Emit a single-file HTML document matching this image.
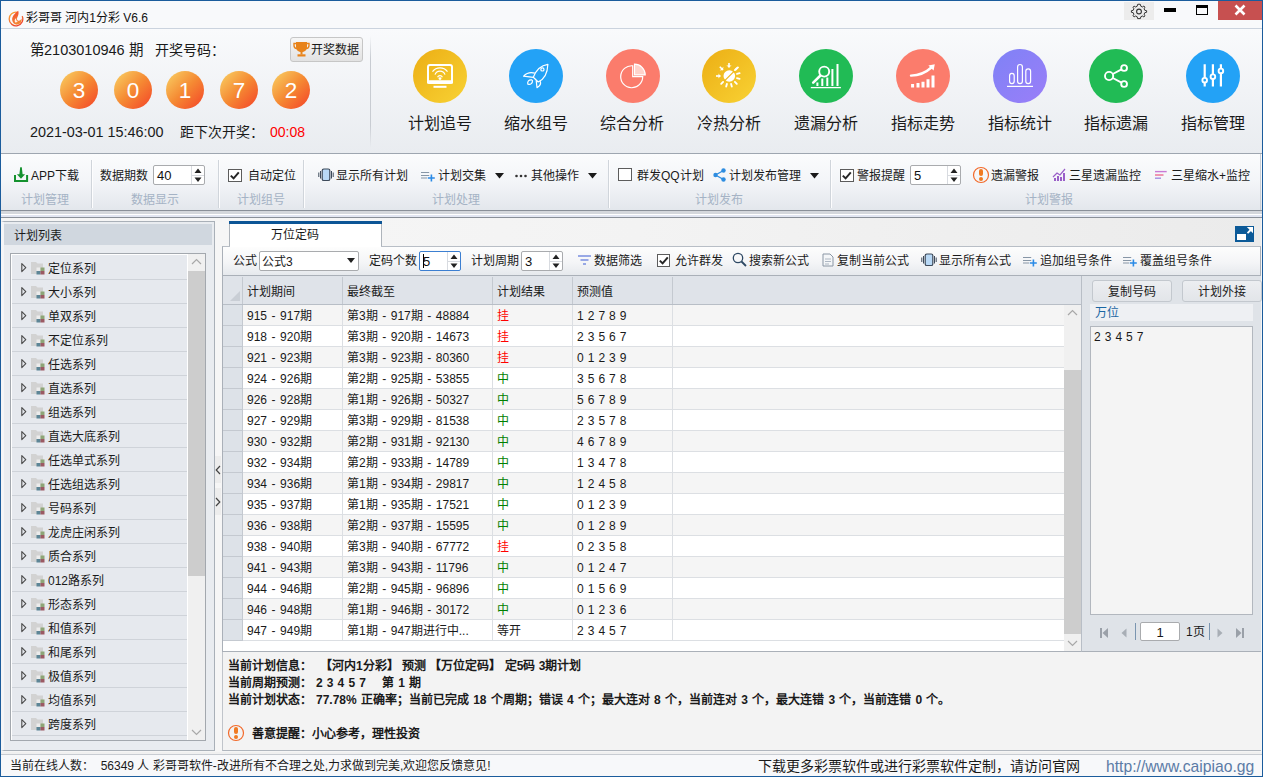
<!DOCTYPE html>
<html lang="zh-CN"><head><meta charset="utf-8">
<style>
*{box-sizing:border-box;margin:0;padding:0}
html,body{width:1263px;height:777px;overflow:hidden;background:#f0f0f0}
body{font-family:"Liberation Sans",sans-serif;font-size:12px;color:#1a1a1a;position:relative}
.a{position:absolute}
.ball{width:38px;height:38px;border-radius:50%;background:linear-gradient(135deg,#f8c25a 12%,#f58a33 50%,#f4502a 90%);color:#fff;font-size:22.5px;text-align:center;line-height:40px}
.t{position:absolute;white-space:nowrap;line-height:1}
#win{position:absolute;left:0;top:0;width:1263px;height:777px;border:1px solid #1b5c9c;border-right:1px solid #1b5c9c;background:#f0f0f0}
</style></head><body>
<div id="win"></div>
<!-- title bar -->
<div class="a" style="left:1px;top:1px;width:1261px;height:27px;background:#f8f9fb"></div>
<div class="a" style="left:1px;top:28px;width:1261px;height:1px;background:#cbd3de"></div>
<svg class="a" style="left:8px;top:10px" width="17" height="17" viewBox="0 0 17 17">
 <defs><linearGradient id="rg" x1="0" y1="0" x2="0.6" y2="1"><stop offset="0" stop-color="#f9b13a"/><stop offset="1" stop-color="#f0402c"/></linearGradient>
 <linearGradient id="fg" x1="0.3" y1="0" x2="0.5" y2="1"><stop offset="0" stop-color="#f24a2e"/><stop offset="1" stop-color="#f58a34"/></linearGradient></defs>
 <path d="M9.18 2.3A6.8 6.8 0 1 0 14.16 6.13" fill="none" stroke="url(#rg)" stroke-width="1.3"/>
 <path d="M10.2 0.8C6.8 3.5 3.8 6.5 4.2 10.3C4.6 13.4 7.2 15 9.6 14.6C12.6 14.1 14.2 11.6 13.4 8.6C12.8 10.4 11.3 11.1 10.2 10.7C8.7 10.1 8.6 8.2 9.6 6.7C10.6 5.1 10.9 2.8 10.2 0.8Z" fill="url(#fg)"/>
 <path d="M7.3 12.6C6.2 11.2 6.6 9 8.2 8.1C7.8 9.6 8.3 11 9.8 11.6C9 12.4 8 12.6 7.3 12.6Z" fill="#fff" opacity="0.9"/>
</svg>
<div class="t" style="left:26px;top:12px;font-size:12px;color:#111">彩哥哥 河内1分彩 V6.6</div>
<div class="a" style="left:1124px;top:2px;width:30px;height:18px;background:#ececec"></div>
<svg class="a" style="left:1130px;top:3px" width="18" height="17" viewBox="0 0 18 17">
 <path d="M9 1.2 L10.4 1.4 L10.8 3.2 L12.3 4 L13.9 3.1 L15 4.2 L14.1 5.8 L14.8 7.3 L16.6 7.7 L16.6 9.3 L14.8 9.7 L14.1 11.2 L15 12.8 L13.9 13.9 L12.3 13 L10.8 13.8 L10.4 15.6 L7.6 15.6 L7.2 13.8 L5.7 13 L4.1 13.9 L3 12.8 L3.9 11.2 L3.2 9.7 L1.4 9.3 L1.4 7.7 L3.2 7.3 L3.9 5.8 L3 4.2 L4.1 3.1 L5.7 4 L7.2 3.2 L7.6 1.4Z" fill="none" stroke="#333" stroke-width="1"/>
 <circle cx="9" cy="8.5" r="2.4" fill="none" stroke="#333" stroke-width="1.1"/>
</svg>
<div class="a" style="left:1164px;top:8px;width:12px;height:4px;background:#000"></div>
<div class="a" style="left:1196px;top:5px;width:12px;height:10px;border:1.5px solid #000;border-top:3px solid #000"></div>
<div class="a" style="left:1218px;top:1px;width:44px;height:19px;background:#c75050"></div>
<svg class="a" style="left:1234px;top:4px" width="12" height="12" viewBox="0 0 12 12"><path d="M1.5 1.5L10.5 10.5M10.5 1.5L1.5 10.5" stroke="#fff" stroke-width="2.6"/></svg>

<!-- header -->
<div class="a" style="left:1px;top:29px;width:1261px;height:124px;background:linear-gradient(#f9fafc,#e9ecf0)"></div>
<div class="a" style="left:1px;top:153px;width:1261px;height:1px;background:#9ea6b0"></div>
<div class="a" style="left:370px;top:36px;width:1px;height:112px;background:linear-gradient(rgba(200,204,210,0),#c8ccd2 20%,#c8ccd2 80%,rgba(200,204,210,0))"></div>
<div class="t" style="left:30px;top:43px;font-size:14.5px;color:#1a1a1a">第2103010946 期</div><div class="t" style="left:155px;top:43px;font-size:14px;color:#1a1a1a">开奖号码：</div>
<div class="a" style="left:290px;top:37px;width:73px;height:25px;border:1px solid #c6c6c6;border-radius:3px;background:linear-gradient(#f6f6f6,#e2e2e2)"></div>
<svg class="a" style="left:293px;top:41px" width="17" height="16" viewBox="0 0 17 16">
 <path d="M3 1H14V6C14 9 11.5 11 8.5 11C5.5 11 3 9 3 6Z" fill="#e8831a"/>
 <path d="M3 2.5H1V4.5C1 6.5 2.5 7.5 4 7.5" fill="none" stroke="#e8831a" stroke-width="1.4"/>
 <path d="M14 2.5H16V4.5C16 6.5 14.5 7.5 13 7.5" fill="none" stroke="#e8831a" stroke-width="1.4"/>
 <rect x="7.5" y="10.5" width="2" height="3" fill="#e8831a"/><rect x="4.5" y="13.3" width="8" height="2.2" fill="#e8831a"/>
</svg>
<div class="t" style="left:311px;top:44px;font-size:12px;color:#1a1a1a">开奖数据</div>
<!-- balls -->
<div class="a ball" style="left:60px;top:71px">3</div>
<div class="a ball" style="left:114px;top:71px">0</div>
<div class="a ball" style="left:166px;top:71px">1</div>
<div class="a ball" style="left:220px;top:71px">7</div>
<div class="a ball" style="left:272px;top:71px">2</div>
<div class="t" style="left:30px;top:125px;font-size:14.4px;color:#1a1a1a">2021-03-01 15:46:00</div><div class="t" style="left:180px;top:125px;font-size:14px;color:#1a1a1a">距下次开奖：</div>
<div class="t" style="left:270px;top:125px;font-size:14px;color:#ff0000">00:08</div>
<!-- icons -->
<div class="a" style="left:413px;top:49px;width:54px;height:54px;border-radius:50%;background:linear-gradient(135deg,#ecae14,#f8d234)"></div>
<div class="t" style="left:390px;width:100px;text-align:center;top:116px;font-size:16px;color:#1a1a1a">计划追号</div>
<div class="a" style="left:509px;top:49px;width:54px;height:54px;border-radius:50%;background:#23a2f6"></div>
<div class="t" style="left:486px;width:100px;text-align:center;top:116px;font-size:16px;color:#1a1a1a">缩水组号</div>
<div class="a" style="left:606px;top:49px;width:54px;height:54px;border-radius:50%;background:#fb7c6c"></div>
<div class="t" style="left:582px;width:100px;text-align:center;top:116px;font-size:16px;color:#1a1a1a">综合分析</div>
<div class="a" style="left:702px;top:49px;width:54px;height:54px;border-radius:50%;background:linear-gradient(135deg,#ecae14,#f8d234)"></div>
<div class="t" style="left:679px;width:100px;text-align:center;top:116px;font-size:16px;color:#1a1a1a">冷热分析</div>
<div class="a" style="left:799px;top:49px;width:54px;height:54px;border-radius:50%;background:#21bb55"></div>
<div class="t" style="left:776px;width:100px;text-align:center;top:116px;font-size:16px;color:#1a1a1a">遗漏分析</div>
<div class="a" style="left:896px;top:49px;width:54px;height:54px;border-radius:50%;background:#fb7c6c"></div>
<div class="t" style="left:873px;width:100px;text-align:center;top:116px;font-size:16px;color:#1a1a1a">指标走势</div>
<div class="a" style="left:993px;top:49px;width:54px;height:54px;border-radius:50%;background:linear-gradient(135deg,#7f82f6,#9a7ef8)"></div>
<div class="t" style="left:970px;width:100px;text-align:center;top:116px;font-size:16px;color:#1a1a1a">指标统计</div>
<div class="a" style="left:1089px;top:49px;width:54px;height:54px;border-radius:50%;background:#21bb55"></div>
<div class="t" style="left:1066px;width:100px;text-align:center;top:116px;font-size:16px;color:#1a1a1a">指标遗漏</div>
<div class="a" style="left:1186px;top:49px;width:54px;height:54px;border-radius:50%;background:#23a2f6"></div>
<div class="t" style="left:1163px;width:100px;text-align:center;top:116px;font-size:16px;color:#1a1a1a">指标管理</div>

<!-- iconsvg -->
<svg class="a" style="left:413px;top:49px" width="54" height="54" viewBox="0 0 54 54"><rect x="15" y="16" width="24" height="18" rx="2" fill="none" stroke="#fff" stroke-width="2"/><rect x="14" y="31.3" width="26" height="3.4" rx="1" fill="#fff"/><rect x="20.5" y="36.8" width="13" height="2" fill="#fff"/><path d="M19.5 22.6A9.45 9.45 0 0 1 34.5 22.6M22 25.6A5.3 5.3 0 0 1 32 25.6M24.6 28.2A2.6 2.6 0 0 1 29.4 28.2" fill="none" stroke="#fff" stroke-width="1.2"/><circle cx="27" cy="29.6" r="1.4" fill="#fff"/></svg>
<svg class="a" style="left:509px;top:49px" width="54" height="54" viewBox="0 0 54 54"><g fill="none" stroke="#fff" stroke-width="1.2" stroke-linejoin="round"><path d="M38.9 15.3C32.5 16.2 27 21 24.3 28.3L29.2 33C36.2 30 38.6 22.5 38.9 15.3Z"/><circle cx="33.4" cy="20.4" r="1.6"/><path d="M25.8 24.2C21.5 23 17.5 24.2 14.6 27.2L24.3 28.3"/><path d="M31 31.8C32.2 34.3 31 37 28 38.6L27.2 31.4"/><path d="M22.5 30.8C19.8 30.6 18.2 32.2 18.8 35.2C21.8 35.8 23.6 34.2 23.5 31.6Z"/></g></svg>
<svg class="a" style="left:606px;top:49px" width="54" height="54" viewBox="0 0 54 54"><path d="M26.7 16.8A11 11 0 1 0 36.7 27.7H26.7Z" fill="none" stroke="#fff" stroke-width="1.2"/><path d="M28.5 15.2V25.9H39.2A10.7 10.7 0 0 0 28.5 15.2Z" fill="#ffd3cb" stroke="#fff" stroke-width="1.2"/></svg>
<svg class="a" style="left:702px;top:49px" width="54" height="54" viewBox="0 0 54 54"><circle cx="27.3" cy="27" r="5.8" fill="#fff"/><path d="M22 32.3L33.5 20.8" stroke="#f0b81c" stroke-width="1.2"/><path d="M33.2 21.1L36.5 17.8" stroke="#fff" stroke-width="1.8"/><path d="M32.9 21.1L34.8 19.2M35.0 24.9L37.6 24.2M35.0 29.1L37.6 29.8M32.9 32.9L34.8 34.8M29.1 35.0L29.8 37.6M24.9 35.0L24.2 37.6M21.1 32.9L19.2 34.8" stroke="#fff" stroke-width="1.9" stroke-linecap="round"/><path d="M14.0 27.0L18.5 27.0" stroke="#fff" stroke-width="1.6"/><path d="M18.5 27.0L16.5 24.4L16.5 29.6Z" fill="#fff"/><path d="M17.8 17.8L21.0 21.0" stroke="#fff" stroke-width="1.6"/><path d="M21.0 21.0L21.4 17.7L17.7 21.4Z" fill="#fff"/><path d="M27.0 14.0L27.0 18.5" stroke="#fff" stroke-width="1.6"/><path d="M27.0 18.5L29.6 16.5L24.4 16.5Z" fill="#fff"/></svg>
<svg class="a" style="left:799px;top:49px" width="54" height="54" viewBox="0 0 54 54"><circle cx="25.2" cy="22.6" r="5" fill="none" stroke="#fff" stroke-width="1.9"/><path d="M21.2 26.8L14.2 33.6" stroke="#fff" stroke-width="2.6" stroke-linecap="round"/><path d="M18.4 37V33.6M23.3 37V29.5M28.3 37V28.5M33.4 37V20M38.5 37V15" stroke="#fff" stroke-width="2"/><path d="M11.8 38.6H41.9" stroke="#fff" stroke-width="1.3"/></svg>
<svg class="a" style="left:896px;top:49px" width="54" height="54" viewBox="0 0 54 54"><path d="M15 26.6C23 26.5 30 23.5 36 18" fill="none" stroke="#fff" stroke-width="2.4" stroke-linecap="round"/><path d="M38.8 15.2L32.4 16.6L37.6 21.6Z" fill="#fff"/><path d="M16.6 38.5V35M22 38.5V34M27 38.5V32.8M32 38.5V30.2M37 38.5V26.4" stroke="#fff" stroke-width="3"/></svg>
<svg class="a" style="left:993px;top:49px" width="54" height="54" viewBox="0 0 54 54"><g fill="none" stroke="#fff" stroke-width="1.2"><rect x="16.6" y="24.4" width="4.6" height="10.2" rx="2.3"/><rect x="24.6" y="15.5" width="4.8" height="19.1" rx="2.4"/><rect x="32.8" y="19.8" width="4.8" height="14.8" rx="2.4"/></g><path d="M14 37.4H40" stroke="#fff" stroke-width="1.2"/></svg>
<svg class="a" style="left:1089px;top:49px" width="54" height="54" viewBox="0 0 54 54"><g fill="none" stroke="#fff" stroke-width="1.9"><circle cx="20.1" cy="27" r="4.1"/><circle cx="35.1" cy="19" r="2.9"/><circle cx="35.1" cy="35" r="2.9"/><path d="M23.8 25L32.5 20.4M23.8 29L32.5 33.6"/></g></svg>
<svg class="a" style="left:1186px;top:49px" width="54" height="54" viewBox="0 0 54 54"><path d="M18.7 15.2V37.6M26.9 15.2V37.6M34.9 15.2V37.6" stroke="#fff" stroke-width="2.2"/><g fill="#23a2f6" stroke="#fff" stroke-width="1.9"><circle cx="18.7" cy="31.2" r="2.3"/><circle cx="26.9" cy="27.7" r="2.3"/><circle cx="34.9" cy="21.9" r="2.3"/></g></svg>
<!-- ribbon -->
<div class="a" style="left:1px;top:154px;width:1261px;height:56px;background:linear-gradient(#fbfcfd,#f3f5f8 50%,#e3e7ec)"></div>
<div class="a" style="left:1px;top:210px;width:1261px;height:1px;background:#8a9099"></div>
<div class="a" style="left:1px;top:211px;width:1261px;height:3px;background:#d4d7dc"></div>
<div class="a" style="left:1px;top:214px;width:1261px;height:1px;background:#ffffff"></div>
<div class="a" style="left:1px;top:215px;width:1261px;height:2px;background:#e2e6f2"></div>
<div class="a" style="left:1px;top:217px;width:1261px;height:1px;background:#8a9099"></div>
<div class="a" style="left:91px;top:160px;width:1px;height:48px;background:#d0d5db"></div><div class="a" style="left:92px;top:160px;width:1px;height:48px;background:#fdfdfe"></div>
<div class="a" style="left:218px;top:160px;width:1px;height:48px;background:#d0d5db"></div><div class="a" style="left:219px;top:160px;width:1px;height:48px;background:#fdfdfe"></div>
<div class="a" style="left:303px;top:160px;width:1px;height:48px;background:#d0d5db"></div><div class="a" style="left:304px;top:160px;width:1px;height:48px;background:#fdfdfe"></div>
<div class="a" style="left:608px;top:160px;width:1px;height:48px;background:#d0d5db"></div><div class="a" style="left:609px;top:160px;width:1px;height:48px;background:#fdfdfe"></div>
<div class="a" style="left:830px;top:160px;width:1px;height:48px;background:#d0d5db"></div><div class="a" style="left:831px;top:160px;width:1px;height:48px;background:#fdfdfe"></div>
<div class="a" style="left:1260px;top:154px;width:1px;height:56px;background:#c9ced5"></div>
<div class="t" style="left:5px;width:80px;text-align:center;top:194px;font-size:12px;color:#a5b3c5">计划管理</div>
<div class="t" style="left:115px;width:80px;text-align:center;top:194px;font-size:12px;color:#a5b3c5">数据显示</div>
<div class="t" style="left:221px;width:80px;text-align:center;top:194px;font-size:12px;color:#a5b3c5">计划组号</div>
<div class="t" style="left:416px;width:80px;text-align:center;top:194px;font-size:12px;color:#a5b3c5">计划处理</div>
<div class="t" style="left:679px;width:80px;text-align:center;top:194px;font-size:12px;color:#a5b3c5">计划发布</div>
<div class="t" style="left:1009px;width:80px;text-align:center;top:194px;font-size:12px;color:#a5b3c5">计划警报</div>
<svg class="a" style="left:14px;top:167px" width="15" height="16" viewBox="0 0 15 16"><path d="M1 8V14.1H13.1V8" fill="none" stroke="#14912e" stroke-width="2"/><path d="M6.2 0.3H7.8L8.6 7.2H11.1L7 11.7L2.9 7.2H5.4Z" fill="#14912e"/></svg>
<div class="t" style="left:31px;top:170px;font-size:12px;color:#1a1a1a">APP下载</div>
<div class="t" style="left:100px;top:170px;font-size:12px;color:#1a1a1a">数据期数</div>
<div class="a" style="left:153px;top:165px;width:52px;height:20px;background:#fff;border:1px solid #a9abae;border-radius:2px"></div>
<div class="t" style="left:157px;top:169px;font-size:13px;color:#111">40</div>
<div class="a" style="left:191px;top:166px;width:1px;height:18px;background:#d8dbe0"></div>
<div class="a" style="left:192px;top:175px;width:12px;height:1px;background:#d8dbe0"></div>
<svg class="a" style="left:192px;top:166px" width="12" height="18" viewBox="0 0 12 18"><path d="M2.5 7.0 L6 2.5 L9.5 7.0Z M2.5 11.5 L6 16.0 L9.5 11.5Z" fill="#222"/></svg>
<div class="a" style="left:228px;top:169px;width:14px;height:13px;background:#fff;border:1px solid #5c5c5c"></div>
<svg class="a" style="left:228px;top:169px" width="14" height="14" viewBox="0 0 14 14"><path d="M2.8 6.6L5.6 9.4L10.8 3.4" fill="none" stroke="#262626" stroke-width="2"/></svg>
<div class="t" style="left:248px;top:170px;font-size:12px;color:#1a1a1a">自动定位</div>
<svg class="a" style="left:318px;top:168px" width="16" height="14" viewBox="0 0 16 14"><rect x="4.2" y="1" width="7.6" height="11.5" rx="1.6" fill="#b9d9f6" stroke="#3d4a5a" stroke-width="1.2"/><path d="M0.8 4.5V9M2.5 3V10.5M13.5 3V10.5M15.2 4.5V9" stroke="#3d4a5a" stroke-width="1"/></svg>
<div class="t" style="left:336px;top:170px;font-size:12px;color:#1a1a1a">显示所有计划</div>
<svg class="a" style="left:421px;top:170px" width="15" height="12" viewBox="0 0 15 12"><path d="M0 2.5H8.2M0 5.5H8.2M0 8H6" stroke="#8796a6" stroke-width="1.2"/><path d="M6.8 8H13.8M10.4 4.5V11.5" stroke="#2a8ae6" stroke-width="1.6"/></svg>
<div class="t" style="left:438px;top:170px;font-size:12px;color:#1a1a1a">计划交集</div>
<svg class="a" style="left:495px;top:173px" width="9" height="6" viewBox="0 0 9 6"><path d="M0 0H9L4.5 5.5Z" fill="#1a1a1a"/></svg>
<svg class="a" style="left:515px;top:174px" width="12" height="4" viewBox="0 0 12 4"><circle cx="1.5" cy="2" r="1.3" fill="#333"/><circle cx="6" cy="2" r="1.3" fill="#333"/><circle cx="10.5" cy="2" r="1.3" fill="#333"/></svg>
<div class="t" style="left:531px;top:170px;font-size:12px;color:#1a1a1a">其他操作</div>
<svg class="a" style="left:588px;top:173px" width="9" height="6" viewBox="0 0 9 6"><path d="M0 0H9L4.5 5.5Z" fill="#1a1a1a"/></svg>
<div class="a" style="left:618px;top:168px;width:14px;height:13px;background:#fff;border:1px solid #5c5c5c"></div>
<div class="t" style="left:637px;top:170px;font-size:12px;color:#1a1a1a">群发QQ计划</div>
<svg class="a" style="left:713px;top:168px" width="13" height="14" viewBox="0 0 13 14"><circle cx="10.5" cy="2.5" r="2.2" fill="#2e8de0"/><circle cx="2.5" cy="7" r="2.2" fill="#2e8de0"/><circle cx="10.5" cy="11.5" r="2.2" fill="#2e8de0"/><path d="M2.5 7L10.5 2.5M2.5 7L10.5 11.5" stroke="#2e8de0" stroke-width="1.4"/></svg>
<div class="t" style="left:729px;top:170px;font-size:12px;color:#1a1a1a">计划发布管理</div>
<svg class="a" style="left:810px;top:173px" width="9" height="6" viewBox="0 0 9 6"><path d="M0 0H9L4.5 5.5Z" fill="#1a1a1a"/></svg>
<div class="a" style="left:840px;top:169px;width:14px;height:13px;background:#fff;border:1px solid #5c5c5c"></div>
<svg class="a" style="left:840px;top:169px" width="14" height="14" viewBox="0 0 14 14"><path d="M2.8 6.6L5.6 9.4L10.8 3.4" fill="none" stroke="#262626" stroke-width="2"/></svg>
<div class="t" style="left:857px;top:170px;font-size:12px;color:#1a1a1a">警报提醒</div>
<div class="a" style="left:910px;top:165px;width:51px;height:20px;background:#fff;border:1px solid #a9abae;border-radius:2px"></div>
<div class="t" style="left:914px;top:169px;font-size:13px;color:#111">5</div>
<div class="a" style="left:947px;top:166px;width:1px;height:18px;background:#d8dbe0"></div>
<div class="a" style="left:948px;top:175px;width:12px;height:1px;background:#d8dbe0"></div>
<svg class="a" style="left:948px;top:166px" width="12" height="18" viewBox="0 0 12 18"><path d="M2.5 7.0 L6 2.5 L9.5 7.0Z M2.5 11.5 L6 16.0 L9.5 11.5Z" fill="#222"/></svg>
<svg class="a" style="left:972px;top:166px" width="18" height="18" viewBox="0 0 18 18"><circle cx="9" cy="9" r="7.5" fill="none" stroke="#f26a2b" stroke-width="1.2"/><rect x="7" y="2.9" width="4" height="7.1" rx="2" fill="#f07a22"/><circle cx="9" cy="13.1" r="2" fill="#f07a22"/></svg>
<div class="t" style="left:991px;top:170px;font-size:12px;color:#1a1a1a">遗漏警报</div>
<svg class="a" style="left:1052px;top:168px" width="14" height="14" viewBox="0 0 14 14"><path d="M1 9L5 5L8 7L13 1" fill="none" stroke="#9a5fc8" stroke-width="1.2"/><path d="M3 10V13M6 8V13M9 9V13M12 5V13" stroke="#9a5fc8" stroke-width="2"/></svg>
<div class="t" style="left:1069px;top:170px;font-size:12px;color:#1a1a1a">三星遗漏监控</div>
<svg class="a" style="left:1154px;top:169px" width="14" height="12" viewBox="0 0 14 12"><path d="M1 2.6H12.7" stroke="#c97ad6" stroke-width="1.4"/><path d="M1 6H9.5" stroke="#ec6c92" stroke-width="1.4"/><path d="M1 9.2H7" stroke="#a58be0" stroke-width="1.4"/></svg>
<div class="t" style="left:1171px;top:170px;font-size:12px;color:#1a1a1a">三星缩水+监控</div>
<!-- main left panel -->
<div class="a" style="left:1px;top:218px;width:1261px;height:534px;background:#f5f5f5"></div>
<div class="a" style="left:1px;top:221px;width:214px;height:530px;background:#e9ecf0;border:1px solid #a9b0b8;border-left:3px solid #f4f5f7"></div>
<div class="a" style="left:4px;top:224px;width:208px;height:21px;background:#d0d7df"></div>
<div class="t" style="left:14px;top:230px;font-size:12px;color:#1a1a1a">计划列表</div>
<div class="a" style="left:10px;top:253px;width:196px;height:488px;background:#fff;border:1px solid #a3a8ae"></div>
<div class="a" style="left:12px;top:255px;width:175px;height:485px;background:#e6e9ee;overflow:hidden">
<div class="a" style="left:0;top:1px;width:175px;height:24px;border-bottom:1px solid #cfd3d9"></div><svg class="a" style="left:9px;top:8px" width="6" height="10" viewBox="0 0 6 10"><path d="M0.8 0.6L4.8 4.6L0.8 8.6Z" fill="none" stroke="#4a4a4a" stroke-width="1.1" stroke-linejoin="round"/></svg><svg class="a" style="left:19px;top:7px" width="15" height="13" viewBox="0 0 15 13"><path d="M0 0H5L6.5 1.5H12V12H0Z" fill="#d2d2d2"/><rect x="5.5" y="5.5" width="4" height="3.5" fill="#ececec"/><rect x="9.5" y="5.5" width="4" height="3.5" fill="#8ea577"/><rect x="5.5" y="9" width="4" height="3.5" fill="#5d8596"/><rect x="9.5" y="9" width="4" height="3.5" fill="#9b5a63"/></svg><div class="t" style="left:36px;top:8px;font-size:12px;color:#1a1a1a">定位系列</div>
<div class="a" style="left:0;top:25px;width:175px;height:24px;border-bottom:1px solid #cfd3d9"></div><svg class="a" style="left:9px;top:32px" width="6" height="10" viewBox="0 0 6 10"><path d="M0.8 0.6L4.8 4.6L0.8 8.6Z" fill="none" stroke="#4a4a4a" stroke-width="1.1" stroke-linejoin="round"/></svg><svg class="a" style="left:19px;top:31px" width="15" height="13" viewBox="0 0 15 13"><path d="M0 0H5L6.5 1.5H12V12H0Z" fill="#d2d2d2"/><rect x="5.5" y="5.5" width="4" height="3.5" fill="#ececec"/><rect x="9.5" y="5.5" width="4" height="3.5" fill="#8ea577"/><rect x="5.5" y="9" width="4" height="3.5" fill="#5d8596"/><rect x="9.5" y="9" width="4" height="3.5" fill="#9b5a63"/></svg><div class="t" style="left:36px;top:32px;font-size:12px;color:#1a1a1a">大小系列</div>
<div class="a" style="left:0;top:49px;width:175px;height:24px;border-bottom:1px solid #cfd3d9"></div><svg class="a" style="left:9px;top:56px" width="6" height="10" viewBox="0 0 6 10"><path d="M0.8 0.6L4.8 4.6L0.8 8.6Z" fill="none" stroke="#4a4a4a" stroke-width="1.1" stroke-linejoin="round"/></svg><svg class="a" style="left:19px;top:55px" width="15" height="13" viewBox="0 0 15 13"><path d="M0 0H5L6.5 1.5H12V12H0Z" fill="#d2d2d2"/><rect x="5.5" y="5.5" width="4" height="3.5" fill="#ececec"/><rect x="9.5" y="5.5" width="4" height="3.5" fill="#8ea577"/><rect x="5.5" y="9" width="4" height="3.5" fill="#5d8596"/><rect x="9.5" y="9" width="4" height="3.5" fill="#9b5a63"/></svg><div class="t" style="left:36px;top:56px;font-size:12px;color:#1a1a1a">单双系列</div>
<div class="a" style="left:0;top:73px;width:175px;height:24px;border-bottom:1px solid #cfd3d9"></div><svg class="a" style="left:9px;top:80px" width="6" height="10" viewBox="0 0 6 10"><path d="M0.8 0.6L4.8 4.6L0.8 8.6Z" fill="none" stroke="#4a4a4a" stroke-width="1.1" stroke-linejoin="round"/></svg><svg class="a" style="left:19px;top:79px" width="15" height="13" viewBox="0 0 15 13"><path d="M0 0H5L6.5 1.5H12V12H0Z" fill="#d2d2d2"/><rect x="5.5" y="5.5" width="4" height="3.5" fill="#ececec"/><rect x="9.5" y="5.5" width="4" height="3.5" fill="#8ea577"/><rect x="5.5" y="9" width="4" height="3.5" fill="#5d8596"/><rect x="9.5" y="9" width="4" height="3.5" fill="#9b5a63"/></svg><div class="t" style="left:36px;top:80px;font-size:12px;color:#1a1a1a">不定位系列</div>
<div class="a" style="left:0;top:97px;width:175px;height:24px;border-bottom:1px solid #cfd3d9"></div><svg class="a" style="left:9px;top:104px" width="6" height="10" viewBox="0 0 6 10"><path d="M0.8 0.6L4.8 4.6L0.8 8.6Z" fill="none" stroke="#4a4a4a" stroke-width="1.1" stroke-linejoin="round"/></svg><svg class="a" style="left:19px;top:103px" width="15" height="13" viewBox="0 0 15 13"><path d="M0 0H5L6.5 1.5H12V12H0Z" fill="#d2d2d2"/><rect x="5.5" y="5.5" width="4" height="3.5" fill="#ececec"/><rect x="9.5" y="5.5" width="4" height="3.5" fill="#8ea577"/><rect x="5.5" y="9" width="4" height="3.5" fill="#5d8596"/><rect x="9.5" y="9" width="4" height="3.5" fill="#9b5a63"/></svg><div class="t" style="left:36px;top:104px;font-size:12px;color:#1a1a1a">任选系列</div>
<div class="a" style="left:0;top:121px;width:175px;height:24px;border-bottom:1px solid #cfd3d9"></div><svg class="a" style="left:9px;top:128px" width="6" height="10" viewBox="0 0 6 10"><path d="M0.8 0.6L4.8 4.6L0.8 8.6Z" fill="none" stroke="#4a4a4a" stroke-width="1.1" stroke-linejoin="round"/></svg><svg class="a" style="left:19px;top:127px" width="15" height="13" viewBox="0 0 15 13"><path d="M0 0H5L6.5 1.5H12V12H0Z" fill="#d2d2d2"/><rect x="5.5" y="5.5" width="4" height="3.5" fill="#ececec"/><rect x="9.5" y="5.5" width="4" height="3.5" fill="#8ea577"/><rect x="5.5" y="9" width="4" height="3.5" fill="#5d8596"/><rect x="9.5" y="9" width="4" height="3.5" fill="#9b5a63"/></svg><div class="t" style="left:36px;top:128px;font-size:12px;color:#1a1a1a">直选系列</div>
<div class="a" style="left:0;top:145px;width:175px;height:24px;border-bottom:1px solid #cfd3d9"></div><svg class="a" style="left:9px;top:152px" width="6" height="10" viewBox="0 0 6 10"><path d="M0.8 0.6L4.8 4.6L0.8 8.6Z" fill="none" stroke="#4a4a4a" stroke-width="1.1" stroke-linejoin="round"/></svg><svg class="a" style="left:19px;top:151px" width="15" height="13" viewBox="0 0 15 13"><path d="M0 0H5L6.5 1.5H12V12H0Z" fill="#d2d2d2"/><rect x="5.5" y="5.5" width="4" height="3.5" fill="#ececec"/><rect x="9.5" y="5.5" width="4" height="3.5" fill="#8ea577"/><rect x="5.5" y="9" width="4" height="3.5" fill="#5d8596"/><rect x="9.5" y="9" width="4" height="3.5" fill="#9b5a63"/></svg><div class="t" style="left:36px;top:152px;font-size:12px;color:#1a1a1a">组选系列</div>
<div class="a" style="left:0;top:169px;width:175px;height:24px;border-bottom:1px solid #cfd3d9"></div><svg class="a" style="left:9px;top:176px" width="6" height="10" viewBox="0 0 6 10"><path d="M0.8 0.6L4.8 4.6L0.8 8.6Z" fill="none" stroke="#4a4a4a" stroke-width="1.1" stroke-linejoin="round"/></svg><svg class="a" style="left:19px;top:175px" width="15" height="13" viewBox="0 0 15 13"><path d="M0 0H5L6.5 1.5H12V12H0Z" fill="#d2d2d2"/><rect x="5.5" y="5.5" width="4" height="3.5" fill="#ececec"/><rect x="9.5" y="5.5" width="4" height="3.5" fill="#8ea577"/><rect x="5.5" y="9" width="4" height="3.5" fill="#5d8596"/><rect x="9.5" y="9" width="4" height="3.5" fill="#9b5a63"/></svg><div class="t" style="left:36px;top:176px;font-size:12px;color:#1a1a1a">直选大底系列</div>
<div class="a" style="left:0;top:193px;width:175px;height:24px;border-bottom:1px solid #cfd3d9"></div><svg class="a" style="left:9px;top:200px" width="6" height="10" viewBox="0 0 6 10"><path d="M0.8 0.6L4.8 4.6L0.8 8.6Z" fill="none" stroke="#4a4a4a" stroke-width="1.1" stroke-linejoin="round"/></svg><svg class="a" style="left:19px;top:199px" width="15" height="13" viewBox="0 0 15 13"><path d="M0 0H5L6.5 1.5H12V12H0Z" fill="#d2d2d2"/><rect x="5.5" y="5.5" width="4" height="3.5" fill="#ececec"/><rect x="9.5" y="5.5" width="4" height="3.5" fill="#8ea577"/><rect x="5.5" y="9" width="4" height="3.5" fill="#5d8596"/><rect x="9.5" y="9" width="4" height="3.5" fill="#9b5a63"/></svg><div class="t" style="left:36px;top:200px;font-size:12px;color:#1a1a1a">任选单式系列</div>
<div class="a" style="left:0;top:217px;width:175px;height:24px;border-bottom:1px solid #cfd3d9"></div><svg class="a" style="left:9px;top:224px" width="6" height="10" viewBox="0 0 6 10"><path d="M0.8 0.6L4.8 4.6L0.8 8.6Z" fill="none" stroke="#4a4a4a" stroke-width="1.1" stroke-linejoin="round"/></svg><svg class="a" style="left:19px;top:223px" width="15" height="13" viewBox="0 0 15 13"><path d="M0 0H5L6.5 1.5H12V12H0Z" fill="#d2d2d2"/><rect x="5.5" y="5.5" width="4" height="3.5" fill="#ececec"/><rect x="9.5" y="5.5" width="4" height="3.5" fill="#8ea577"/><rect x="5.5" y="9" width="4" height="3.5" fill="#5d8596"/><rect x="9.5" y="9" width="4" height="3.5" fill="#9b5a63"/></svg><div class="t" style="left:36px;top:224px;font-size:12px;color:#1a1a1a">任选组选系列</div>
<div class="a" style="left:0;top:241px;width:175px;height:24px;border-bottom:1px solid #cfd3d9"></div><svg class="a" style="left:9px;top:248px" width="6" height="10" viewBox="0 0 6 10"><path d="M0.8 0.6L4.8 4.6L0.8 8.6Z" fill="none" stroke="#4a4a4a" stroke-width="1.1" stroke-linejoin="round"/></svg><svg class="a" style="left:19px;top:247px" width="15" height="13" viewBox="0 0 15 13"><path d="M0 0H5L6.5 1.5H12V12H0Z" fill="#d2d2d2"/><rect x="5.5" y="5.5" width="4" height="3.5" fill="#ececec"/><rect x="9.5" y="5.5" width="4" height="3.5" fill="#8ea577"/><rect x="5.5" y="9" width="4" height="3.5" fill="#5d8596"/><rect x="9.5" y="9" width="4" height="3.5" fill="#9b5a63"/></svg><div class="t" style="left:36px;top:248px;font-size:12px;color:#1a1a1a">号码系列</div>
<div class="a" style="left:0;top:265px;width:175px;height:24px;border-bottom:1px solid #cfd3d9"></div><svg class="a" style="left:9px;top:272px" width="6" height="10" viewBox="0 0 6 10"><path d="M0.8 0.6L4.8 4.6L0.8 8.6Z" fill="none" stroke="#4a4a4a" stroke-width="1.1" stroke-linejoin="round"/></svg><svg class="a" style="left:19px;top:271px" width="15" height="13" viewBox="0 0 15 13"><path d="M0 0H5L6.5 1.5H12V12H0Z" fill="#d2d2d2"/><rect x="5.5" y="5.5" width="4" height="3.5" fill="#ececec"/><rect x="9.5" y="5.5" width="4" height="3.5" fill="#8ea577"/><rect x="5.5" y="9" width="4" height="3.5" fill="#5d8596"/><rect x="9.5" y="9" width="4" height="3.5" fill="#9b5a63"/></svg><div class="t" style="left:36px;top:272px;font-size:12px;color:#1a1a1a">龙虎庄闲系列</div>
<div class="a" style="left:0;top:289px;width:175px;height:24px;border-bottom:1px solid #cfd3d9"></div><svg class="a" style="left:9px;top:296px" width="6" height="10" viewBox="0 0 6 10"><path d="M0.8 0.6L4.8 4.6L0.8 8.6Z" fill="none" stroke="#4a4a4a" stroke-width="1.1" stroke-linejoin="round"/></svg><svg class="a" style="left:19px;top:295px" width="15" height="13" viewBox="0 0 15 13"><path d="M0 0H5L6.5 1.5H12V12H0Z" fill="#d2d2d2"/><rect x="5.5" y="5.5" width="4" height="3.5" fill="#ececec"/><rect x="9.5" y="5.5" width="4" height="3.5" fill="#8ea577"/><rect x="5.5" y="9" width="4" height="3.5" fill="#5d8596"/><rect x="9.5" y="9" width="4" height="3.5" fill="#9b5a63"/></svg><div class="t" style="left:36px;top:296px;font-size:12px;color:#1a1a1a">质合系列</div>
<div class="a" style="left:0;top:313px;width:175px;height:24px;border-bottom:1px solid #cfd3d9"></div><svg class="a" style="left:9px;top:320px" width="6" height="10" viewBox="0 0 6 10"><path d="M0.8 0.6L4.8 4.6L0.8 8.6Z" fill="none" stroke="#4a4a4a" stroke-width="1.1" stroke-linejoin="round"/></svg><svg class="a" style="left:19px;top:319px" width="15" height="13" viewBox="0 0 15 13"><path d="M0 0H5L6.5 1.5H12V12H0Z" fill="#d2d2d2"/><rect x="5.5" y="5.5" width="4" height="3.5" fill="#ececec"/><rect x="9.5" y="5.5" width="4" height="3.5" fill="#8ea577"/><rect x="5.5" y="9" width="4" height="3.5" fill="#5d8596"/><rect x="9.5" y="9" width="4" height="3.5" fill="#9b5a63"/></svg><div class="t" style="left:36px;top:320px;font-size:12px;color:#1a1a1a">012路系列</div>
<div class="a" style="left:0;top:337px;width:175px;height:24px;border-bottom:1px solid #cfd3d9"></div><svg class="a" style="left:9px;top:344px" width="6" height="10" viewBox="0 0 6 10"><path d="M0.8 0.6L4.8 4.6L0.8 8.6Z" fill="none" stroke="#4a4a4a" stroke-width="1.1" stroke-linejoin="round"/></svg><svg class="a" style="left:19px;top:343px" width="15" height="13" viewBox="0 0 15 13"><path d="M0 0H5L6.5 1.5H12V12H0Z" fill="#d2d2d2"/><rect x="5.5" y="5.5" width="4" height="3.5" fill="#ececec"/><rect x="9.5" y="5.5" width="4" height="3.5" fill="#8ea577"/><rect x="5.5" y="9" width="4" height="3.5" fill="#5d8596"/><rect x="9.5" y="9" width="4" height="3.5" fill="#9b5a63"/></svg><div class="t" style="left:36px;top:344px;font-size:12px;color:#1a1a1a">形态系列</div>
<div class="a" style="left:0;top:361px;width:175px;height:24px;border-bottom:1px solid #cfd3d9"></div><svg class="a" style="left:9px;top:368px" width="6" height="10" viewBox="0 0 6 10"><path d="M0.8 0.6L4.8 4.6L0.8 8.6Z" fill="none" stroke="#4a4a4a" stroke-width="1.1" stroke-linejoin="round"/></svg><svg class="a" style="left:19px;top:367px" width="15" height="13" viewBox="0 0 15 13"><path d="M0 0H5L6.5 1.5H12V12H0Z" fill="#d2d2d2"/><rect x="5.5" y="5.5" width="4" height="3.5" fill="#ececec"/><rect x="9.5" y="5.5" width="4" height="3.5" fill="#8ea577"/><rect x="5.5" y="9" width="4" height="3.5" fill="#5d8596"/><rect x="9.5" y="9" width="4" height="3.5" fill="#9b5a63"/></svg><div class="t" style="left:36px;top:368px;font-size:12px;color:#1a1a1a">和值系列</div>
<div class="a" style="left:0;top:385px;width:175px;height:24px;border-bottom:1px solid #cfd3d9"></div><svg class="a" style="left:9px;top:392px" width="6" height="10" viewBox="0 0 6 10"><path d="M0.8 0.6L4.8 4.6L0.8 8.6Z" fill="none" stroke="#4a4a4a" stroke-width="1.1" stroke-linejoin="round"/></svg><svg class="a" style="left:19px;top:391px" width="15" height="13" viewBox="0 0 15 13"><path d="M0 0H5L6.5 1.5H12V12H0Z" fill="#d2d2d2"/><rect x="5.5" y="5.5" width="4" height="3.5" fill="#ececec"/><rect x="9.5" y="5.5" width="4" height="3.5" fill="#8ea577"/><rect x="5.5" y="9" width="4" height="3.5" fill="#5d8596"/><rect x="9.5" y="9" width="4" height="3.5" fill="#9b5a63"/></svg><div class="t" style="left:36px;top:392px;font-size:12px;color:#1a1a1a">和尾系列</div>
<div class="a" style="left:0;top:409px;width:175px;height:24px;border-bottom:1px solid #cfd3d9"></div><svg class="a" style="left:9px;top:416px" width="6" height="10" viewBox="0 0 6 10"><path d="M0.8 0.6L4.8 4.6L0.8 8.6Z" fill="none" stroke="#4a4a4a" stroke-width="1.1" stroke-linejoin="round"/></svg><svg class="a" style="left:19px;top:415px" width="15" height="13" viewBox="0 0 15 13"><path d="M0 0H5L6.5 1.5H12V12H0Z" fill="#d2d2d2"/><rect x="5.5" y="5.5" width="4" height="3.5" fill="#ececec"/><rect x="9.5" y="5.5" width="4" height="3.5" fill="#8ea577"/><rect x="5.5" y="9" width="4" height="3.5" fill="#5d8596"/><rect x="9.5" y="9" width="4" height="3.5" fill="#9b5a63"/></svg><div class="t" style="left:36px;top:416px;font-size:12px;color:#1a1a1a">极值系列</div>
<div class="a" style="left:0;top:433px;width:175px;height:24px;border-bottom:1px solid #cfd3d9"></div><svg class="a" style="left:9px;top:440px" width="6" height="10" viewBox="0 0 6 10"><path d="M0.8 0.6L4.8 4.6L0.8 8.6Z" fill="none" stroke="#4a4a4a" stroke-width="1.1" stroke-linejoin="round"/></svg><svg class="a" style="left:19px;top:439px" width="15" height="13" viewBox="0 0 15 13"><path d="M0 0H5L6.5 1.5H12V12H0Z" fill="#d2d2d2"/><rect x="5.5" y="5.5" width="4" height="3.5" fill="#ececec"/><rect x="9.5" y="5.5" width="4" height="3.5" fill="#8ea577"/><rect x="5.5" y="9" width="4" height="3.5" fill="#5d8596"/><rect x="9.5" y="9" width="4" height="3.5" fill="#9b5a63"/></svg><div class="t" style="left:36px;top:440px;font-size:12px;color:#1a1a1a">均值系列</div>
<div class="a" style="left:0;top:457px;width:175px;height:24px;border-bottom:1px solid #cfd3d9"></div><svg class="a" style="left:9px;top:464px" width="6" height="10" viewBox="0 0 6 10"><path d="M0.8 0.6L4.8 4.6L0.8 8.6Z" fill="none" stroke="#4a4a4a" stroke-width="1.1" stroke-linejoin="round"/></svg><svg class="a" style="left:19px;top:463px" width="15" height="13" viewBox="0 0 15 13"><path d="M0 0H5L6.5 1.5H12V12H0Z" fill="#d2d2d2"/><rect x="5.5" y="5.5" width="4" height="3.5" fill="#ececec"/><rect x="9.5" y="5.5" width="4" height="3.5" fill="#8ea577"/><rect x="5.5" y="9" width="4" height="3.5" fill="#5d8596"/><rect x="9.5" y="9" width="4" height="3.5" fill="#9b5a63"/></svg><div class="t" style="left:36px;top:464px;font-size:12px;color:#1a1a1a">跨度系列</div>
<div class="a" style="left:0;top:481px;width:175px;height:24px;border-bottom:1px solid #cfd3d9"></div><svg class="a" style="left:9px;top:488px" width="6" height="10" viewBox="0 0 6 10"><path d="M0.8 0.6L4.8 4.6L0.8 8.6Z" fill="none" stroke="#4a4a4a" stroke-width="1.1" stroke-linejoin="round"/></svg><svg class="a" style="left:19px;top:487px" width="15" height="13" viewBox="0 0 15 13"><path d="M0 0H5L6.5 1.5H12V12H0Z" fill="#d2d2d2"/><rect x="5.5" y="5.5" width="4" height="3.5" fill="#ececec"/><rect x="9.5" y="5.5" width="4" height="3.5" fill="#8ea577"/><rect x="5.5" y="9" width="4" height="3.5" fill="#5d8596"/><rect x="9.5" y="9" width="4" height="3.5" fill="#9b5a63"/></svg><div class="t" style="left:36px;top:488px;font-size:12px;color:#1a1a1a">其他系列</div>
</div>
<div class="a" style="left:188px;top:254px;width:17px;height:486px;background:#f0f0f0"></div>
<div class="a" style="left:188px;top:271px;width:17px;height:305px;background:#cdcdcd"></div>
<svg class="a" style="left:191px;top:258px" width="11" height="8" viewBox="0 0 11 8"><path d="M1 6L5.5 1.5L10 6" fill="none" stroke="#a8a8a8" stroke-width="1.2"/></svg>
<svg class="a" style="left:191px;top:728px" width="11" height="8" viewBox="0 0 11 8"><path d="M1 2L5.5 6.5L10 2" fill="none" stroke="#a8a8a8" stroke-width="1.2"/></svg>
<div class="a" style="left:215px;top:222px;width:7px;height:529px;background:#f6f6f6"></div>
<div class="a" style="left:215px;top:456px;width:6px;height:27px;background:#ededed"></div>
<div class="a" style="left:215px;top:488px;width:6px;height:27px;background:#ededed"></div>
<svg class="a" style="left:215px;top:465px" width="6" height="10" viewBox="0 0 6 10"><path d="M5 1L1.2 5L5 9" fill="none" stroke="#444" stroke-width="1.2"/></svg>
<svg class="a" style="left:215px;top:497px" width="6" height="10" viewBox="0 0 6 10"><path d="M1 1L4.8 5L1 9" fill="none" stroke="#444" stroke-width="1.2"/></svg>
<!-- tab -->
<div class="a" style="left:222px;top:218px;width:1039px;height:28px;background:linear-gradient(to right,#f6f6f6,#f3f3f3 40%,#ebebeb)"></div>
<div class="a" style="left:229px;top:221px;width:153px;height:26px;background:#fff;border-left:1px solid #aeb4bb;border-right:1px solid #aeb4bb"></div>
<div class="a" style="left:229px;top:221px;width:153px;height:3px;background:#0c5596"></div>
<div class="t" style="left:271px;top:229px;font-size:12px;color:#1a1a1a">万位定码</div>
<svg class="a" style="left:1235px;top:226px" width="19" height="16" viewBox="0 0 19 16"><rect x="0" y="0" width="19" height="16" fill="#0c5a98"/><rect x="2" y="8" width="9" height="6" fill="#fff"/><path d="M12.5 7.2L16.2 3.5" stroke="#fff" stroke-width="1.8"/><path d="M11.8 1H18V7.2Z" fill="#fff"/></svg>
<div class="a" style="left:222px;top:246px;width:1039px;height:30px;background:linear-gradient(#fdfdfd,#f4f5f7 55%,#e6e9ed);border:1px solid #aab0b8;border-top:1px solid #b8bec6"></div>
<div class="a" style="left:230px;top:246px;width:151px;height:1px;background:#fff"></div>
<div class="t" style="left:233px;top:255px;font-size:12px;color:#1a1a1a;">公式</div>
<div class="a" style="left:259px;top:251px;width:100px;height:20px;background:#fff;border:1px solid #a9abae;border-radius:2px"></div>
<div class="t" style="left:262px;top:256px;font-size:12px;color:#1a1a1a;">公式3</div>
<svg class="a" style="left:347px;top:258px" width="8" height="5" viewBox="0 0 8 5"><path d="M0 0H8L4 5Z" fill="#222"/></svg>
<div class="t" style="left:369px;top:255px;font-size:12px;color:#1a1a1a;">定码个数</div>
<div class="a" style="left:419px;top:251px;width:42px;height:20px;background:#fff;border:1px solid #3c7fd1;border-radius:2px"></div>
<div class="t" style="left:423px;top:255px;font-size:13px;color:#111">5</div>
<div class="a" style="left:447px;top:252px;width:1px;height:18px;background:#d8dbe0"></div>
<div class="a" style="left:448px;top:261px;width:12px;height:1px;background:#d8dbe0"></div>
<svg class="a" style="left:448px;top:252px" width="12" height="18" viewBox="0 0 12 18"><path d="M2.5 7.0 L6 2.5 L9.5 7.0Z M2.5 11.5 L6 16.0 L9.5 11.5Z" fill="#222"/></svg>
<div class="a" style="left:423px;top:254px;width:1px;height:14px;background:#000"></div>
<div class="t" style="left:471px;top:255px;font-size:12px;color:#1a1a1a;">计划周期</div>
<div class="a" style="left:521px;top:251px;width:42px;height:20px;background:#fff;border:1px solid #a9abae;border-radius:2px"></div>
<div class="t" style="left:525px;top:255px;font-size:13px;color:#111">3</div>
<div class="a" style="left:549px;top:252px;width:1px;height:18px;background:#d8dbe0"></div>
<div class="a" style="left:550px;top:261px;width:12px;height:1px;background:#d8dbe0"></div>
<svg class="a" style="left:550px;top:252px" width="12" height="18" viewBox="0 0 12 18"><path d="M2.5 7.0 L6 2.5 L9.5 7.0Z M2.5 11.5 L6 16.0 L9.5 11.5Z" fill="#222"/></svg>
<svg class="a" style="left:578px;top:255px" width="13" height="11" viewBox="0 0 13 11"><path d="M0 1H13M2.5 5H10.5M5 9H8" stroke="#7a8ee0" stroke-width="1.5"/></svg>
<div class="t" style="left:594px;top:255px;font-size:12px;color:#1a1a1a;">数据筛选</div>
<div class="a" style="left:657px;top:254px;width:13px;height:13px;background:#fff;border:1px solid #5c5c5c"></div>
<svg class="a" style="left:656.5px;top:253.5px" width="14" height="14" viewBox="0 0 14 14"><path d="M2.8 6.6L5.6 9.4L10.8 3.4" fill="none" stroke="#262626" stroke-width="2"/></svg>
<div class="t" style="left:675px;top:255px;font-size:12px;color:#1a1a1a;">允许群发</div>
<svg class="a" style="left:732px;top:252px" width="15" height="15" viewBox="0 0 15 15"><circle cx="6" cy="6" r="4.7" fill="none" stroke="#2d4863" stroke-width="1.3"/><path d="M9.5 9.5L14 14" stroke="#2d4863" stroke-width="1.8"/></svg>
<div class="t" style="left:749px;top:255px;font-size:12px;color:#1a1a1a;">搜索新公式</div>
<svg class="a" style="left:822px;top:253px" width="12" height="14" viewBox="0 0 12 14"><path d="M1 1H8L11 4V13H1Z" fill="#f4f6f8" stroke="#8a96a4" stroke-width="1"/><path d="M3 6H9M3 8.5H9M3 11H7" stroke="#a6b0bc" stroke-width="0.9"/></svg>
<div class="t" style="left:837px;top:255px;font-size:12px;color:#1a1a1a;">复制当前公式</div>
<svg class="a" style="left:921px;top:253px" width="16" height="14" viewBox="0 0 16 14"><rect x="4.2" y="1" width="7.6" height="11.5" rx="1.6" fill="#b9d9f6" stroke="#3d4a5a" stroke-width="1.2"/><path d="M0.8 4.5V9M2.5 3V10.5M13.5 3V10.5M15.2 4.5V9" stroke="#3d4a5a" stroke-width="1"/></svg>
<div class="t" style="left:939px;top:255px;font-size:12px;color:#1a1a1a;">显示所有公式</div>
<svg class="a" style="left:1023px;top:255px" width="15" height="12" viewBox="0 0 15 12"><path d="M0 2.5H8.2M0 5.5H8.2M0 8H6" stroke="#8796a6" stroke-width="1.2"/><path d="M6.8 8H13.8M10.4 4.5V11.5" stroke="#2a8ae6" stroke-width="1.6"/></svg>
<div class="t" style="left:1040px;top:255px;font-size:12px;color:#1a1a1a;">追加组号条件</div>
<svg class="a" style="left:1123px;top:255px" width="15" height="12" viewBox="0 0 15 12"><path d="M0 2.5H8.2M0 5.5H8.2M0 8H6" stroke="#8796a6" stroke-width="1.2"/><path d="M6.8 8H13.8M10.4 4.5V11.5" stroke="#2a8ae6" stroke-width="1.6"/></svg>
<div class="t" style="left:1140px;top:255px;font-size:12px;color:#1a1a1a;">覆盖组号条件</div>
<!-- grid -->
<div class="a" style="left:222px;top:276px;width:860px;height:376px;background:#fff;border-left:1px solid #aab0b8;border-bottom:1px solid #aab0b8"></div>
<div class="a" style="left:223px;top:276px;width:859px;height:29px;background:#dfe3e9;border-bottom:1px solid #b8bec6"></div>
<div class="a" style="left:242px;top:277px;width:1px;height:27px;background:#c4c9d0"></div>
<div class="a" style="left:342px;top:277px;width:1px;height:27px;background:#c4c9d0"></div>
<div class="a" style="left:492px;top:277px;width:1px;height:27px;background:#c4c9d0"></div>
<div class="a" style="left:572px;top:277px;width:1px;height:27px;background:#c4c9d0"></div>
<div class="a" style="left:672px;top:277px;width:1px;height:27px;background:#c4c9d0"></div>
<svg class="a" style="left:228px;top:290px" width="13" height="12" viewBox="0 0 13 12"><path d="M12 1V11H2Z" fill="#c9ced5"/></svg>
<div class="t" style="left:247px;top:286px;font-size:12px;color:#1a1a1a;">计划期间</div>
<div class="t" style="left:347px;top:286px;font-size:12px;color:#1a1a1a;">最终截至</div>
<div class="t" style="left:497px;top:286px;font-size:12px;color:#1a1a1a;">计划结果</div>
<div class="t" style="left:577px;top:286px;font-size:12px;color:#1a1a1a;">预测值</div>
<div class="a" style="left:242px;top:305px;width:822px;height:21px;background:#f5f5f5;border-bottom:1px solid #dcdfe3"></div><div class="a" style="left:223px;top:305px;width:20px;height:21px;background:#dde2e8;border-bottom:1px solid #c4c9d0;border-right:1px solid #c4c9d0"></div><div class="a" style="left:342px;top:305px;width:1px;height:21px;background:#dcdfe3"></div><div class="a" style="left:492px;top:305px;width:1px;height:21px;background:#dcdfe3"></div><div class="a" style="left:572px;top:305px;width:1px;height:21px;background:#dcdfe3"></div><div class="a" style="left:672px;top:305px;width:1px;height:21px;background:#dcdfe3"></div><div class="t" style="left:247px;top:310px;font-size:12px;color:#1a1a1a;word-spacing:1.2px">915 - 917期</div>
<div class="t" style="left:347px;top:310px;font-size:12px;color:#1a1a1a;word-spacing:1.2px">第3期 - 917期 - 48884</div>
<div class="t" style="left:497px;top:310px;font-size:12px;color:#ff0000;">挂</div>
<div class="t" style="left:577px;top:310px;font-size:12px;color:#1a1a1a;word-spacing:0.7px">1 2 7 8 9</div>
<div class="a" style="left:242px;top:326px;width:822px;height:21px;background:#ffffff;border-bottom:1px solid #dcdfe3"></div><div class="a" style="left:223px;top:326px;width:20px;height:21px;background:#dde2e8;border-bottom:1px solid #c4c9d0;border-right:1px solid #c4c9d0"></div><div class="a" style="left:342px;top:326px;width:1px;height:21px;background:#dcdfe3"></div><div class="a" style="left:492px;top:326px;width:1px;height:21px;background:#dcdfe3"></div><div class="a" style="left:572px;top:326px;width:1px;height:21px;background:#dcdfe3"></div><div class="a" style="left:672px;top:326px;width:1px;height:21px;background:#dcdfe3"></div><div class="t" style="left:247px;top:331px;font-size:12px;color:#1a1a1a;word-spacing:1.2px">918 - 920期</div>
<div class="t" style="left:347px;top:331px;font-size:12px;color:#1a1a1a;word-spacing:1.2px">第3期 - 920期 - 14673</div>
<div class="t" style="left:497px;top:331px;font-size:12px;color:#ff0000;">挂</div>
<div class="t" style="left:577px;top:331px;font-size:12px;color:#1a1a1a;word-spacing:0.7px">2 3 5 6 7</div>
<div class="a" style="left:242px;top:347px;width:822px;height:21px;background:#f5f5f5;border-bottom:1px solid #dcdfe3"></div><div class="a" style="left:223px;top:347px;width:20px;height:21px;background:#dde2e8;border-bottom:1px solid #c4c9d0;border-right:1px solid #c4c9d0"></div><div class="a" style="left:342px;top:347px;width:1px;height:21px;background:#dcdfe3"></div><div class="a" style="left:492px;top:347px;width:1px;height:21px;background:#dcdfe3"></div><div class="a" style="left:572px;top:347px;width:1px;height:21px;background:#dcdfe3"></div><div class="a" style="left:672px;top:347px;width:1px;height:21px;background:#dcdfe3"></div><div class="t" style="left:247px;top:352px;font-size:12px;color:#1a1a1a;word-spacing:1.2px">921 - 923期</div>
<div class="t" style="left:347px;top:352px;font-size:12px;color:#1a1a1a;word-spacing:1.2px">第3期 - 923期 - 80360</div>
<div class="t" style="left:497px;top:352px;font-size:12px;color:#ff0000;">挂</div>
<div class="t" style="left:577px;top:352px;font-size:12px;color:#1a1a1a;word-spacing:0.7px">0 1 2 3 9</div>
<div class="a" style="left:242px;top:368px;width:822px;height:21px;background:#ffffff;border-bottom:1px solid #dcdfe3"></div><div class="a" style="left:223px;top:368px;width:20px;height:21px;background:#dde2e8;border-bottom:1px solid #c4c9d0;border-right:1px solid #c4c9d0"></div><div class="a" style="left:342px;top:368px;width:1px;height:21px;background:#dcdfe3"></div><div class="a" style="left:492px;top:368px;width:1px;height:21px;background:#dcdfe3"></div><div class="a" style="left:572px;top:368px;width:1px;height:21px;background:#dcdfe3"></div><div class="a" style="left:672px;top:368px;width:1px;height:21px;background:#dcdfe3"></div><div class="t" style="left:247px;top:373px;font-size:12px;color:#1a1a1a;word-spacing:1.2px">924 - 926期</div>
<div class="t" style="left:347px;top:373px;font-size:12px;color:#1a1a1a;word-spacing:1.2px">第2期 - 925期 - 53855</div>
<div class="t" style="left:497px;top:373px;font-size:12px;color:#008000;">中</div>
<div class="t" style="left:577px;top:373px;font-size:12px;color:#1a1a1a;word-spacing:0.7px">3 5 6 7 8</div>
<div class="a" style="left:242px;top:389px;width:822px;height:21px;background:#f5f5f5;border-bottom:1px solid #dcdfe3"></div><div class="a" style="left:223px;top:389px;width:20px;height:21px;background:#dde2e8;border-bottom:1px solid #c4c9d0;border-right:1px solid #c4c9d0"></div><div class="a" style="left:342px;top:389px;width:1px;height:21px;background:#dcdfe3"></div><div class="a" style="left:492px;top:389px;width:1px;height:21px;background:#dcdfe3"></div><div class="a" style="left:572px;top:389px;width:1px;height:21px;background:#dcdfe3"></div><div class="a" style="left:672px;top:389px;width:1px;height:21px;background:#dcdfe3"></div><div class="t" style="left:247px;top:394px;font-size:12px;color:#1a1a1a;word-spacing:1.2px">926 - 928期</div>
<div class="t" style="left:347px;top:394px;font-size:12px;color:#1a1a1a;word-spacing:1.2px">第1期 - 926期 - 50327</div>
<div class="t" style="left:497px;top:394px;font-size:12px;color:#008000;">中</div>
<div class="t" style="left:577px;top:394px;font-size:12px;color:#1a1a1a;word-spacing:0.7px">5 6 7 8 9</div>
<div class="a" style="left:242px;top:410px;width:822px;height:21px;background:#ffffff;border-bottom:1px solid #dcdfe3"></div><div class="a" style="left:223px;top:410px;width:20px;height:21px;background:#dde2e8;border-bottom:1px solid #c4c9d0;border-right:1px solid #c4c9d0"></div><div class="a" style="left:342px;top:410px;width:1px;height:21px;background:#dcdfe3"></div><div class="a" style="left:492px;top:410px;width:1px;height:21px;background:#dcdfe3"></div><div class="a" style="left:572px;top:410px;width:1px;height:21px;background:#dcdfe3"></div><div class="a" style="left:672px;top:410px;width:1px;height:21px;background:#dcdfe3"></div><div class="t" style="left:247px;top:415px;font-size:12px;color:#1a1a1a;word-spacing:1.2px">927 - 929期</div>
<div class="t" style="left:347px;top:415px;font-size:12px;color:#1a1a1a;word-spacing:1.2px">第3期 - 929期 - 81538</div>
<div class="t" style="left:497px;top:415px;font-size:12px;color:#008000;">中</div>
<div class="t" style="left:577px;top:415px;font-size:12px;color:#1a1a1a;word-spacing:0.7px">2 3 5 7 8</div>
<div class="a" style="left:242px;top:431px;width:822px;height:21px;background:#f5f5f5;border-bottom:1px solid #dcdfe3"></div><div class="a" style="left:223px;top:431px;width:20px;height:21px;background:#dde2e8;border-bottom:1px solid #c4c9d0;border-right:1px solid #c4c9d0"></div><div class="a" style="left:342px;top:431px;width:1px;height:21px;background:#dcdfe3"></div><div class="a" style="left:492px;top:431px;width:1px;height:21px;background:#dcdfe3"></div><div class="a" style="left:572px;top:431px;width:1px;height:21px;background:#dcdfe3"></div><div class="a" style="left:672px;top:431px;width:1px;height:21px;background:#dcdfe3"></div><div class="t" style="left:247px;top:436px;font-size:12px;color:#1a1a1a;word-spacing:1.2px">930 - 932期</div>
<div class="t" style="left:347px;top:436px;font-size:12px;color:#1a1a1a;word-spacing:1.2px">第2期 - 931期 - 92130</div>
<div class="t" style="left:497px;top:436px;font-size:12px;color:#008000;">中</div>
<div class="t" style="left:577px;top:436px;font-size:12px;color:#1a1a1a;word-spacing:0.7px">4 6 7 8 9</div>
<div class="a" style="left:242px;top:452px;width:822px;height:21px;background:#ffffff;border-bottom:1px solid #dcdfe3"></div><div class="a" style="left:223px;top:452px;width:20px;height:21px;background:#dde2e8;border-bottom:1px solid #c4c9d0;border-right:1px solid #c4c9d0"></div><div class="a" style="left:342px;top:452px;width:1px;height:21px;background:#dcdfe3"></div><div class="a" style="left:492px;top:452px;width:1px;height:21px;background:#dcdfe3"></div><div class="a" style="left:572px;top:452px;width:1px;height:21px;background:#dcdfe3"></div><div class="a" style="left:672px;top:452px;width:1px;height:21px;background:#dcdfe3"></div><div class="t" style="left:247px;top:457px;font-size:12px;color:#1a1a1a;word-spacing:1.2px">932 - 934期</div>
<div class="t" style="left:347px;top:457px;font-size:12px;color:#1a1a1a;word-spacing:1.2px">第2期 - 933期 - 14789</div>
<div class="t" style="left:497px;top:457px;font-size:12px;color:#008000;">中</div>
<div class="t" style="left:577px;top:457px;font-size:12px;color:#1a1a1a;word-spacing:0.7px">1 3 4 7 8</div>
<div class="a" style="left:242px;top:473px;width:822px;height:21px;background:#f5f5f5;border-bottom:1px solid #dcdfe3"></div><div class="a" style="left:223px;top:473px;width:20px;height:21px;background:#dde2e8;border-bottom:1px solid #c4c9d0;border-right:1px solid #c4c9d0"></div><div class="a" style="left:342px;top:473px;width:1px;height:21px;background:#dcdfe3"></div><div class="a" style="left:492px;top:473px;width:1px;height:21px;background:#dcdfe3"></div><div class="a" style="left:572px;top:473px;width:1px;height:21px;background:#dcdfe3"></div><div class="a" style="left:672px;top:473px;width:1px;height:21px;background:#dcdfe3"></div><div class="t" style="left:247px;top:478px;font-size:12px;color:#1a1a1a;word-spacing:1.2px">934 - 936期</div>
<div class="t" style="left:347px;top:478px;font-size:12px;color:#1a1a1a;word-spacing:1.2px">第1期 - 934期 - 29817</div>
<div class="t" style="left:497px;top:478px;font-size:12px;color:#008000;">中</div>
<div class="t" style="left:577px;top:478px;font-size:12px;color:#1a1a1a;word-spacing:0.7px">1 2 4 5 8</div>
<div class="a" style="left:242px;top:494px;width:822px;height:21px;background:#ffffff;border-bottom:1px solid #dcdfe3"></div><div class="a" style="left:223px;top:494px;width:20px;height:21px;background:#dde2e8;border-bottom:1px solid #c4c9d0;border-right:1px solid #c4c9d0"></div><div class="a" style="left:342px;top:494px;width:1px;height:21px;background:#dcdfe3"></div><div class="a" style="left:492px;top:494px;width:1px;height:21px;background:#dcdfe3"></div><div class="a" style="left:572px;top:494px;width:1px;height:21px;background:#dcdfe3"></div><div class="a" style="left:672px;top:494px;width:1px;height:21px;background:#dcdfe3"></div><div class="t" style="left:247px;top:499px;font-size:12px;color:#1a1a1a;word-spacing:1.2px">935 - 937期</div>
<div class="t" style="left:347px;top:499px;font-size:12px;color:#1a1a1a;word-spacing:1.2px">第1期 - 935期 - 17521</div>
<div class="t" style="left:497px;top:499px;font-size:12px;color:#008000;">中</div>
<div class="t" style="left:577px;top:499px;font-size:12px;color:#1a1a1a;word-spacing:0.7px">0 1 2 3 9</div>
<div class="a" style="left:242px;top:515px;width:822px;height:21px;background:#f5f5f5;border-bottom:1px solid #dcdfe3"></div><div class="a" style="left:223px;top:515px;width:20px;height:21px;background:#dde2e8;border-bottom:1px solid #c4c9d0;border-right:1px solid #c4c9d0"></div><div class="a" style="left:342px;top:515px;width:1px;height:21px;background:#dcdfe3"></div><div class="a" style="left:492px;top:515px;width:1px;height:21px;background:#dcdfe3"></div><div class="a" style="left:572px;top:515px;width:1px;height:21px;background:#dcdfe3"></div><div class="a" style="left:672px;top:515px;width:1px;height:21px;background:#dcdfe3"></div><div class="t" style="left:247px;top:520px;font-size:12px;color:#1a1a1a;word-spacing:1.2px">936 - 938期</div>
<div class="t" style="left:347px;top:520px;font-size:12px;color:#1a1a1a;word-spacing:1.2px">第2期 - 937期 - 15595</div>
<div class="t" style="left:497px;top:520px;font-size:12px;color:#008000;">中</div>
<div class="t" style="left:577px;top:520px;font-size:12px;color:#1a1a1a;word-spacing:0.7px">0 1 2 8 9</div>
<div class="a" style="left:242px;top:536px;width:822px;height:21px;background:#ffffff;border-bottom:1px solid #dcdfe3"></div><div class="a" style="left:223px;top:536px;width:20px;height:21px;background:#dde2e8;border-bottom:1px solid #c4c9d0;border-right:1px solid #c4c9d0"></div><div class="a" style="left:342px;top:536px;width:1px;height:21px;background:#dcdfe3"></div><div class="a" style="left:492px;top:536px;width:1px;height:21px;background:#dcdfe3"></div><div class="a" style="left:572px;top:536px;width:1px;height:21px;background:#dcdfe3"></div><div class="a" style="left:672px;top:536px;width:1px;height:21px;background:#dcdfe3"></div><div class="t" style="left:247px;top:541px;font-size:12px;color:#1a1a1a;word-spacing:1.2px">938 - 940期</div>
<div class="t" style="left:347px;top:541px;font-size:12px;color:#1a1a1a;word-spacing:1.2px">第3期 - 940期 - 67772</div>
<div class="t" style="left:497px;top:541px;font-size:12px;color:#ff0000;">挂</div>
<div class="t" style="left:577px;top:541px;font-size:12px;color:#1a1a1a;word-spacing:0.7px">0 2 3 5 8</div>
<div class="a" style="left:242px;top:557px;width:822px;height:21px;background:#f5f5f5;border-bottom:1px solid #dcdfe3"></div><div class="a" style="left:223px;top:557px;width:20px;height:21px;background:#dde2e8;border-bottom:1px solid #c4c9d0;border-right:1px solid #c4c9d0"></div><div class="a" style="left:342px;top:557px;width:1px;height:21px;background:#dcdfe3"></div><div class="a" style="left:492px;top:557px;width:1px;height:21px;background:#dcdfe3"></div><div class="a" style="left:572px;top:557px;width:1px;height:21px;background:#dcdfe3"></div><div class="a" style="left:672px;top:557px;width:1px;height:21px;background:#dcdfe3"></div><div class="t" style="left:247px;top:562px;font-size:12px;color:#1a1a1a;word-spacing:1.2px">941 - 943期</div>
<div class="t" style="left:347px;top:562px;font-size:12px;color:#1a1a1a;word-spacing:1.2px">第3期 - 943期 - 11796</div>
<div class="t" style="left:497px;top:562px;font-size:12px;color:#008000;">中</div>
<div class="t" style="left:577px;top:562px;font-size:12px;color:#1a1a1a;word-spacing:0.7px">0 1 2 4 7</div>
<div class="a" style="left:242px;top:578px;width:822px;height:21px;background:#ffffff;border-bottom:1px solid #dcdfe3"></div><div class="a" style="left:223px;top:578px;width:20px;height:21px;background:#dde2e8;border-bottom:1px solid #c4c9d0;border-right:1px solid #c4c9d0"></div><div class="a" style="left:342px;top:578px;width:1px;height:21px;background:#dcdfe3"></div><div class="a" style="left:492px;top:578px;width:1px;height:21px;background:#dcdfe3"></div><div class="a" style="left:572px;top:578px;width:1px;height:21px;background:#dcdfe3"></div><div class="a" style="left:672px;top:578px;width:1px;height:21px;background:#dcdfe3"></div><div class="t" style="left:247px;top:583px;font-size:12px;color:#1a1a1a;word-spacing:1.2px">944 - 946期</div>
<div class="t" style="left:347px;top:583px;font-size:12px;color:#1a1a1a;word-spacing:1.2px">第2期 - 945期 - 96896</div>
<div class="t" style="left:497px;top:583px;font-size:12px;color:#008000;">中</div>
<div class="t" style="left:577px;top:583px;font-size:12px;color:#1a1a1a;word-spacing:0.7px">0 1 5 6 9</div>
<div class="a" style="left:242px;top:599px;width:822px;height:21px;background:#f5f5f5;border-bottom:1px solid #dcdfe3"></div><div class="a" style="left:223px;top:599px;width:20px;height:21px;background:#dde2e8;border-bottom:1px solid #c4c9d0;border-right:1px solid #c4c9d0"></div><div class="a" style="left:342px;top:599px;width:1px;height:21px;background:#dcdfe3"></div><div class="a" style="left:492px;top:599px;width:1px;height:21px;background:#dcdfe3"></div><div class="a" style="left:572px;top:599px;width:1px;height:21px;background:#dcdfe3"></div><div class="a" style="left:672px;top:599px;width:1px;height:21px;background:#dcdfe3"></div><div class="t" style="left:247px;top:604px;font-size:12px;color:#1a1a1a;word-spacing:1.2px">946 - 948期</div>
<div class="t" style="left:347px;top:604px;font-size:12px;color:#1a1a1a;word-spacing:1.2px">第1期 - 946期 - 30172</div>
<div class="t" style="left:497px;top:604px;font-size:12px;color:#008000;">中</div>
<div class="t" style="left:577px;top:604px;font-size:12px;color:#1a1a1a;word-spacing:0.7px">0 1 2 3 6</div>
<div class="a" style="left:242px;top:620px;width:822px;height:21px;background:#ffffff;border-bottom:1px solid #dcdfe3"></div><div class="a" style="left:223px;top:620px;width:20px;height:21px;background:#dde2e8;border-bottom:1px solid #c4c9d0;border-right:1px solid #c4c9d0"></div><div class="a" style="left:342px;top:620px;width:1px;height:21px;background:#dcdfe3"></div><div class="a" style="left:492px;top:620px;width:1px;height:21px;background:#dcdfe3"></div><div class="a" style="left:572px;top:620px;width:1px;height:21px;background:#dcdfe3"></div><div class="a" style="left:672px;top:620px;width:1px;height:21px;background:#dcdfe3"></div><div class="t" style="left:247px;top:625px;font-size:12px;color:#1a1a1a;word-spacing:1.2px">947 - 949期</div>
<div class="t" style="left:347px;top:625px;font-size:12px;color:#1a1a1a;word-spacing:1.2px">第1期 - 947期进行中...</div>
<div class="t" style="left:497px;top:625px;font-size:12px;color:#1a1a1a;">等开</div>
<div class="t" style="left:577px;top:625px;font-size:12px;color:#1a1a1a;word-spacing:0.7px">2 3 4 5 7</div>
<div class="a" style="left:1064px;top:305px;width:17px;height:346px;background:#f0f0f0"></div>
<div class="a" style="left:1064px;top:370px;width:17px;height:264px;background:#cdcdcd"></div>
<svg class="a" style="left:1067px;top:309px" width="11" height="8" viewBox="0 0 11 8"><path d="M1 6L5.5 1.5L10 6" fill="none" stroke="#a8a8a8" stroke-width="1.2"/></svg>
<svg class="a" style="left:1067px;top:639px" width="11" height="8" viewBox="0 0 11 8"><path d="M1 2L5.5 6.5L10 2" fill="none" stroke="#a8a8a8" stroke-width="1.2"/></svg>
<div class="a" style="left:1081px;top:276px;width:180px;height:376px;background:#dfe3e8;border-left:1px solid #b8bec6;border-bottom:1px solid #aab0b8"></div>
<div class="a" style="left:1092px;top:280px;width:80px;height:22px;background:linear-gradient(#eceef1,#e2e5e9);border:1px solid #c3c8ce;border-radius:3px"></div><div class="t" style="left:1092px;top:286px;font-size:12px;color:#1a1a1a;width:80px;text-align:center">复制号码</div>
<div class="a" style="left:1182px;top:280px;width:80px;height:22px;background:linear-gradient(#eceef1,#e2e5e9);border:1px solid #c3c8ce;border-radius:3px"></div><div class="t" style="left:1182px;top:286px;font-size:12px;color:#1a1a1a;width:80px;text-align:center">计划外接</div>
<div class="a" style="left:1090px;top:304px;width:163px;height:17px;background:#eef0f3"></div>
<div class="t" style="left:1095px;top:307px;font-size:12px;color:#1a66a3;">万位</div>
<div class="a" style="left:1090px;top:326px;width:163px;height:289px;background:#f4f4f4;border:1px solid #b2b7be"></div>
<div class="t" style="left:1094px;top:331px;font-size:12px;color:#1a1a1a;word-spacing:0.7px">2 3 4 5 7</div>
<svg class="a" style="left:1099px;top:627px" width="150" height="12" viewBox="0 0 150 12"><rect x="1" y="1" width="2" height="10" fill="#9aa0a8"/><path d="M9 1V11L3.5 6Z" fill="#9aa0a8"/><path d="M27.5 1.5V10.5L22.5 6Z" fill="#a8aeb5"/><path d="M118.5 1.5V10.5L123.5 6Z" fill="#a8aeb5"/><path d="M137 1V11L142.5 6Z" fill="#9aa0a8"/><rect x="143" y="1" width="2" height="10" fill="#9aa0a8"/></svg>
<div class="a" style="left:1135px;top:623px;width:1px;height:17px;background:#7a95b0"></div>
<div class="a" style="left:1209px;top:623px;width:1px;height:17px;background:#7a95b0"></div>
<div class="a" style="left:1140px;top:622px;width:40px;height:19px;background:#fff;border:1px solid #a9abae;border-radius:2px"></div>
<div class="t" style="left:1140px;top:626px;font-size:13px;color:#1a1a1a;width:40px;text-align:center">1</div>
<div class="t" style="left:1186px;top:626px;font-size:12px;color:#1a1a1a;">1页</div>
<div class="a" style="left:222px;top:652px;width:1039px;height:99px;background:#f3f3f3;border-left:1px solid #c0c4ca;border-bottom:1px solid #b0b6be"></div>
<div class="t" style="left:228px;top:660px;font-size:12px;color:#1a1a1a;font-weight:bold">当前计划信息：</div>
<div class="t" style="left:320px;top:660px;font-size:12px;color:#1a1a1a;font-weight:bold">【河内1分彩】 预测 【万位定码】 定5码 3期计划</div>
<div class="t" style="left:228px;top:677px;font-size:12px;color:#1a1a1a;font-weight:bold">当前周期预测：</div>
<div class="t" style="left:316px;top:677px;font-size:12px;color:#1a1a1a;font-weight:bold;word-spacing:0.8px">2 3 4 5 7</div>
<div class="t" style="left:382px;top:677px;font-size:12px;color:#1a1a1a;font-weight:bold;word-spacing:1px">第 1 期</div>
<div class="t" style="left:228px;top:694px;font-size:12px;color:#1a1a1a;font-weight:bold">当前计划状态：</div>
<div class="t" style="left:316px;top:694px;font-size:12px;color:#1a1a1a;font-weight:bold;word-spacing:0.9px">77.78% 正确率；当前已完成 18 个周期；错误 4 个；最大连对 8 个，当前连对 3 个，最大连错 3 个，当前连错 0 个。</div>
<svg class="a" style="left:227px;top:724px" width="18" height="18" viewBox="0 0 18 18"><circle cx="9" cy="9" r="7.5" fill="none" stroke="#f26a2b" stroke-width="1.2"/><rect x="7" y="2.9" width="4" height="7.1" rx="2" fill="#f07a22"/><circle cx="9" cy="13.1" r="2" fill="#f07a22"/></svg>
<div class="t" style="left:252px;top:728px;font-size:12px;color:#1a1a1a;font-weight:bold">善意提醒：小心参考，理性投资</div>
<div class="a" style="left:1px;top:754px;width:1261px;height:1px;background:#c8ccd2"></div>
<div class="a" style="left:1px;top:755px;width:1261px;height:21px;background:#f7f8fa"></div>
<div class="t" style="left:10px;top:760px;font-size:12px;color:#1a1a1a;">当前在线人数：&nbsp;&nbsp;56349 人 彩哥哥软件-改进所有不合理之处,力求做到完美,欢迎您反馈意见!</div>
<div class="t" style="left:758px;top:759px;font-size:14px;color:#1a1a1a;">下载更多彩票软件或进行彩票软件定制，请访问官网</div>
<div class="t" style="left:1106px;top:759px;font-size:15.7px;color:#5b7ba6;">http://www.caipiao.gg</div>
</body></html>
